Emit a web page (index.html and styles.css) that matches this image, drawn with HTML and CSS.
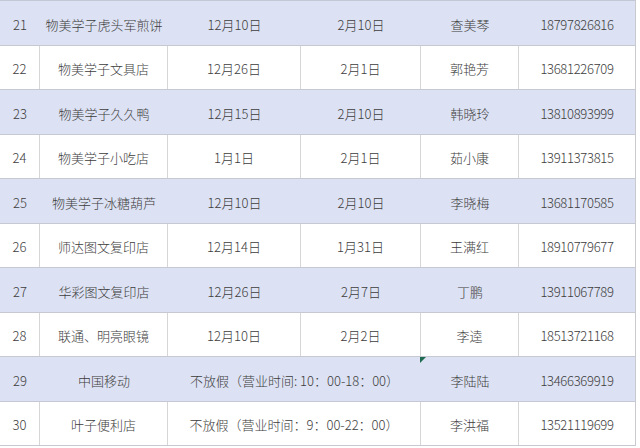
FILE: index.html
```html
<!DOCTYPE html>
<html lang="zh">
<head>
<meta charset="utf-8">
<link rel="stylesheet" href="styles.css">
</head>
<body>
<div class="sheet">
  <div class="row shade"><div class="c">21</div><div class="c">物美学子虎头军煎饼</div><div class="c">12月10日</div><div class="c">2月10日</div><div class="c">查美琴</div><div class="c num">18797826816</div></div>
  <div class="row plain"><div class="c">22</div><div class="c">物美学子文具店</div><div class="c">12月26日</div><div class="c">2月1日</div><div class="c">郭艳芳</div><div class="c num">13681226709</div></div>
  <div class="row shade"><div class="c">23</div><div class="c">物美学子久久鸭</div><div class="c">12月15日</div><div class="c">2月10日</div><div class="c">韩晓玲</div><div class="c num">13810893999</div></div>
  <div class="row plain"><div class="c">24</div><div class="c">物美学子小吃店</div><div class="c">1月1日</div><div class="c">2月1日</div><div class="c">茹小康</div><div class="c num">13911373815</div></div>
  <div class="row shade"><div class="c">25</div><div class="c">物美学子冰糖葫芦</div><div class="c">12月10日</div><div class="c">2月10日</div><div class="c">李晓梅</div><div class="c num">13681170585</div></div>
  <div class="row plain"><div class="c">26</div><div class="c">师达图文复印店</div><div class="c">12月14日</div><div class="c">1月31日</div><div class="c">王满红</div><div class="c num">18910779677</div></div>
  <div class="row shade"><div class="c">27</div><div class="c">华彩图文复印店</div><div class="c">12月26日</div><div class="c">2月7日</div><div class="c">丁鹏</div><div class="c num">13911067789</div></div>
  <div class="row plain"><div class="c">28</div><div class="c">联通、明亮眼镜</div><div class="c">12月10日</div><div class="c">2月2日</div><div class="c mark">李逵</div><div class="c num">18513721168</div></div>
  <div class="row shade"><div class="c">29</div><div class="c">中国移动</div><div class="c wide">不放假（营业时间: 10：00-18：00）</div><div class="c">李陆陆</div><div class="c num">13466369919</div></div>
  <div class="row plain"><div class="c">30</div><div class="c">叶子便利店</div><div class="c wide">不放假（营业时间：9：00-22：00）</div><div class="c">李洪福</div><div class="c num">13521119699</div></div>
</div>
</body>
</html>
```

FILE: styles.css
```css
html, body {
  margin: 0;
  padding: 0;
  background: #ffffff;
}
.sheet {
  width: 636px;
  border-top: 1px solid #c4c8d4;
  font-family: "Noto Sans CJK SC", "Noto Sans", sans-serif;
  font-size: 13px;
  font-weight: 300;
  color: #3c3c3c;
}
.row {
  display: grid;
  grid-template-columns: 40px 128px 133px 120px 98px 116px;
  height: 44.5px;
  box-sizing: border-box;
  border-bottom: 1px solid #c6c9d2;
  border-right: 1px solid #c8cad0;
}
.shade {
  background: #dce2f3;
}
.plain {
  background: #ffffff;
}
.c {
  display: flex;
  align-items: center;
  justify-content: center;
  padding-top: 3px;
  box-sizing: border-box;
  white-space: nowrap;
  position: relative;
}
.plain .c {
  border-right: 1px solid #d6d6d6;
}
.plain .c:last-child {
  border-right: none;
}
.num {
  letter-spacing: -0.3px;
}
.wide {
  grid-column: span 2;
}
.mark::after {
  content: "";
  position: absolute;
  left: -1px;
  bottom: -7px;
  width: 0;
  height: 0;
  border-top: 6px solid #1f6b4f;
  border-right: 6px solid transparent;
  z-index: 2;
}
```
